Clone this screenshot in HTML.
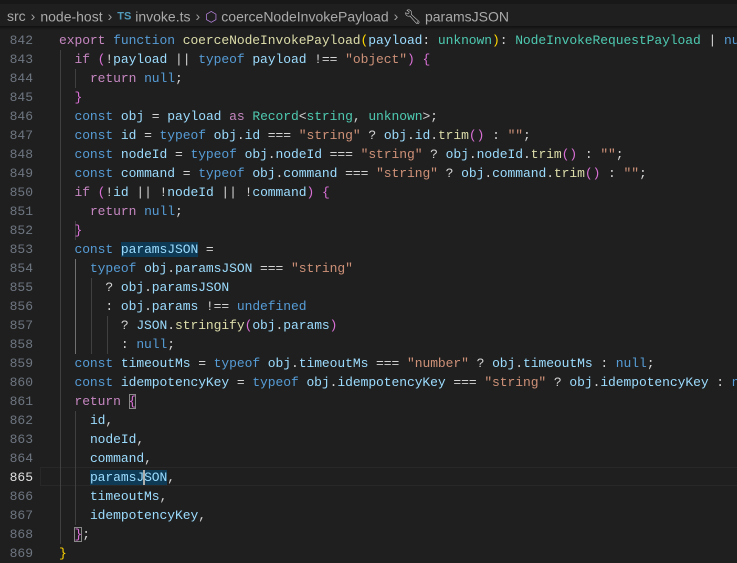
<!DOCTYPE html>
<html><head><meta charset="utf-8"><style>
body{margin:0;background:#1f1f1f;width:737px;height:556px;overflow:hidden;position:relative}
.bc{position:absolute;left:0;top:4px;height:22px;width:737px;font:14px "Liberation Sans",sans-serif;color:#a9a9a9;line-height:22px;white-space:nowrap}
.bc span{vertical-align:middle}
.sep{color:#a0a0a0;margin:0 5px}
.shadow{position:absolute;left:0;top:26px;width:737px;height:4px;background:linear-gradient(#111,#1f1f1f)}
.code{position:absolute;left:59px;font:13px/19px "Liberation Mono",monospace;color:#d4d4d4;white-space:normal;letter-spacing:-0.07px}
.row{height:19px;white-space:pre}
.k{color:#c586c0}.b{color:#569cd6}.v{color:#9cdcfe}.f{color:#dcdcaa}.s{color:#ce9178}.t{color:#4ec9b0}
.y{color:#ffd700}.m{color:#da70d6}.c{color:#179fff}
.g{position:absolute;width:1px;background:#404040}
.sel{background:#0e3a55}
</style></head><body>
<div style="position:absolute;left:0;top:0;width:737px;height:4px;background:#181818"></div>
<div class="bc"><span style="margin-left:7px">src</span><span class="sep">›</span><span>node-host</span><span class="sep">›</span><span style="color:#519aba;font-weight:bold;font-size:11px">TS</span> <span>invoke.ts</span><span class="sep">›</span><span style="color:#b180d7">⬡</span> <span>coerceNodeInvokePayload</span><span class="sep">›</span><span style="color:#ccc">🔧︎</span> <span>paramsJSON</span></div>
<div class="shadow"></div>
<div style="position:absolute;left:40px;top:467px;width:697px;height:17px;border:1px solid #282828"></div>
<div class="g" style="left:60px;top:50px;height:494px"></div>
<div class="g" style="left:75px;top:69px;height:19px"></div>
<div class="g" style="left:75px;top:221px;height:19px"></div>
<div class="g" style="left:75px;top:259px;height:95px;background:#707070"></div>
<div class="g" style="left:91px;top:278px;height:76px"></div>
<div class="g" style="left:107px;top:316px;height:38px"></div>
<div class="g" style="left:75px;top:411px;height:114px"></div>
<div class="code" style="top:31px"><div class="row"><span class="k">export</span> <span class="b">function</span> <span class="f">coerceNodeInvokePayload</span><span class="y">(</span><span class="v">payload</span>: <span class="t">unknown</span><span class="y">)</span>: <span class="t">NodeInvokeRequestPayload</span> | <span class="b">null</span></div><div class="row">  <span class="k">if</span> <span class="m">(</span>!<span class="v">payload</span> || <span class="b">typeof</span> <span class="v">payload</span> !== <span class="s">"object"</span><span class="m">)</span> <span class="m">{</span></div><div class="row">    <span class="k">return</span> <span class="b">null</span>;</div><div class="row">  <span class="m">}</span></div><div class="row">  <span class="b">const</span> <span class="v">obj</span> = <span class="v">payload</span> <span class="k">as</span> <span class="t">Record</span>&lt;<span class="t">string</span>, <span class="t">unknown</span>&gt;;</div><div class="row">  <span class="b">const</span> <span class="v">id</span> = <span class="b">typeof</span> <span class="v">obj</span>.<span class="v">id</span> === <span class="s">"string"</span> ? <span class="v">obj</span>.<span class="v">id</span>.<span class="f">trim</span><span class="m">()</span> : <span class="s">""</span>;</div><div class="row">  <span class="b">const</span> <span class="v">nodeId</span> = <span class="b">typeof</span> <span class="v">obj</span>.<span class="v">nodeId</span> === <span class="s">"string"</span> ? <span class="v">obj</span>.<span class="v">nodeId</span>.<span class="f">trim</span><span class="m">()</span> : <span class="s">""</span>;</div><div class="row">  <span class="b">const</span> <span class="v">command</span> = <span class="b">typeof</span> <span class="v">obj</span>.<span class="v">command</span> === <span class="s">"string"</span> ? <span class="v">obj</span>.<span class="v">command</span>.<span class="f">trim</span><span class="m">()</span> : <span class="s">""</span>;</div><div class="row">  <span class="k">if</span> <span class="m">(</span>!<span class="v">id</span> || !<span class="v">nodeId</span> || !<span class="v">command</span><span class="m">)</span> <span class="m">{</span></div><div class="row">    <span class="k">return</span> <span class="b">null</span>;</div><div class="row">  <span class="m">}</span></div><div class="row">  <span class="b">const</span> <span class="v sel">paramsJSON</span> =</div><div class="row">    <span class="b">typeof</span> <span class="v">obj</span>.<span class="v">paramsJSON</span> === <span class="s">"string"</span></div><div class="row">      ? <span class="v">obj</span>.<span class="v">paramsJSON</span></div><div class="row">      : <span class="v">obj</span>.<span class="v">params</span> !== <span class="b">undefined</span></div><div class="row">        ? <span class="v">JSON</span>.<span class="f">stringify</span><span class="m">(</span><span class="v">obj</span>.<span class="v">params</span><span class="m">)</span></div><div class="row">        : <span class="b">null</span>;</div><div class="row">  <span class="b">const</span> <span class="v">timeoutMs</span> = <span class="b">typeof</span> <span class="v">obj</span>.<span class="v">timeoutMs</span> === <span class="s">"number"</span> ? <span class="v">obj</span>.<span class="v">timeoutMs</span> : <span class="b">null</span>;</div><div class="row">  <span class="b">const</span> <span class="v">idempotencyKey</span> = <span class="b">typeof</span> <span class="v">obj</span>.<span class="v">idempotencyKey</span> === <span class="s">"string"</span> ? <span class="v">obj</span>.<span class="v">idempotencyKey</span> : <span class="b">null</span></div><div class="row">  <span class="k">return</span> <span class="m" style="outline:1px solid #888;outline-offset:-1px">{</span></div><div class="row">    <span class="v">id</span>,</div><div class="row">    <span class="v">nodeId</span>,</div><div class="row">    <span class="v">command</span>,</div><div class="row">    <span class="v sel">paramsJ<span style="border-left:2px solid #aeafad;margin-left:-1px;margin-right:-1px"></span>SON</span>,</div><div class="row">    <span class="v">timeoutMs</span>,</div><div class="row">    <span class="v">idempotencyKey</span>,</div><div class="row">  <span class="m" style="outline:1px solid #888;outline-offset:-1px">}</span>;</div><div class="row"><span class="y">}</span></div></div>
<div class="code" style="left:0;top:31px;width:33px;text-align:right;color:#6e7681;letter-spacing:0"><div class="row">842</div><div class="row">843</div><div class="row">844</div><div class="row">845</div><div class="row">846</div><div class="row">847</div><div class="row">848</div><div class="row">849</div><div class="row">850</div><div class="row">851</div><div class="row">852</div><div class="row">853</div><div class="row">854</div><div class="row">855</div><div class="row">856</div><div class="row">857</div><div class="row">858</div><div class="row">859</div><div class="row">860</div><div class="row">861</div><div class="row">862</div><div class="row">863</div><div class="row">864</div><div class="row" style="color:#e0e0e0">865</div><div class="row">866</div><div class="row">867</div><div class="row">868</div><div class="row">869</div></div>
</body></html>
